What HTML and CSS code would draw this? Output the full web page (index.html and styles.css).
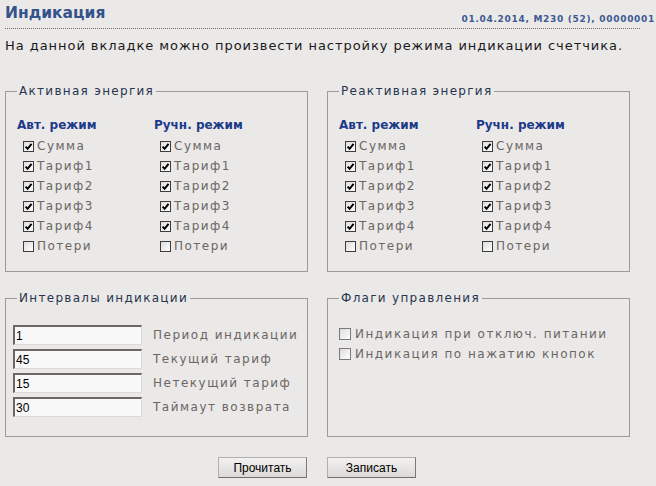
FILE: index.html
```html
<!DOCTYPE html>
<html lang="ru">
<head>
<meta charset="utf-8">
<link rel="stylesheet" href="styles.css">
</head>
<body>
<div class="page">
  <div class="header">
    <h1 class="title">Индикация</h1>
    <div class="meta">01.04.2014, M230 (52), 00000001</div>
  </div>
  <p class="intro">На данной вкладке можно произвести настройку режима индикации счетчика.</p>

  <div class="grid">
    <fieldset class="box box-top">
      <legend>Активная энергия</legend>
      <div class="cols">
        <div class="col">
          <div class="colhead">Авт. режим</div>
          <label class="cb"><span class="mark on"><svg viewBox="0 0 10 10"><path d="M1.8 5.2 L4 7.6 L8.4 2.2" /></svg></span>Сумма</label>
          <label class="cb"><span class="mark on"><svg viewBox="0 0 10 10"><path d="M1.8 5.2 L4 7.6 L8.4 2.2" /></svg></span>Тариф1</label>
          <label class="cb"><span class="mark on"><svg viewBox="0 0 10 10"><path d="M1.8 5.2 L4 7.6 L8.4 2.2" /></svg></span>Тариф2</label>
          <label class="cb"><span class="mark on"><svg viewBox="0 0 10 10"><path d="M1.8 5.2 L4 7.6 L8.4 2.2" /></svg></span>Тариф3</label>
          <label class="cb"><span class="mark on"><svg viewBox="0 0 10 10"><path d="M1.8 5.2 L4 7.6 L8.4 2.2" /></svg></span>Тариф4</label>
          <label class="cb"><span class="mark"></span>Потери</label>
        </div>
        <div class="col">
          <div class="colhead">Ручн. режим</div>
          <label class="cb"><span class="mark on"><svg viewBox="0 0 10 10"><path d="M1.8 5.2 L4 7.6 L8.4 2.2" /></svg></span>Сумма</label>
          <label class="cb"><span class="mark on"><svg viewBox="0 0 10 10"><path d="M1.8 5.2 L4 7.6 L8.4 2.2" /></svg></span>Тариф1</label>
          <label class="cb"><span class="mark on"><svg viewBox="0 0 10 10"><path d="M1.8 5.2 L4 7.6 L8.4 2.2" /></svg></span>Тариф2</label>
          <label class="cb"><span class="mark on"><svg viewBox="0 0 10 10"><path d="M1.8 5.2 L4 7.6 L8.4 2.2" /></svg></span>Тариф3</label>
          <label class="cb"><span class="mark on"><svg viewBox="0 0 10 10"><path d="M1.8 5.2 L4 7.6 L8.4 2.2" /></svg></span>Тариф4</label>
          <label class="cb"><span class="mark"></span>Потери</label>
        </div>
      </div>
    </fieldset>

    <fieldset class="box box-top">
      <legend>Реактивная энергия</legend>
      <div class="cols">
        <div class="col">
          <div class="colhead">Авт. режим</div>
          <label class="cb"><span class="mark on"><svg viewBox="0 0 10 10"><path d="M1.8 5.2 L4 7.6 L8.4 2.2" /></svg></span>Сумма</label>
          <label class="cb"><span class="mark on"><svg viewBox="0 0 10 10"><path d="M1.8 5.2 L4 7.6 L8.4 2.2" /></svg></span>Тариф1</label>
          <label class="cb"><span class="mark on"><svg viewBox="0 0 10 10"><path d="M1.8 5.2 L4 7.6 L8.4 2.2" /></svg></span>Тариф2</label>
          <label class="cb"><span class="mark on"><svg viewBox="0 0 10 10"><path d="M1.8 5.2 L4 7.6 L8.4 2.2" /></svg></span>Тариф3</label>
          <label class="cb"><span class="mark on"><svg viewBox="0 0 10 10"><path d="M1.8 5.2 L4 7.6 L8.4 2.2" /></svg></span>Тариф4</label>
          <label class="cb"><span class="mark"></span>Потери</label>
        </div>
        <div class="col">
          <div class="colhead">Ручн. режим</div>
          <label class="cb"><span class="mark on"><svg viewBox="0 0 10 10"><path d="M1.8 5.2 L4 7.6 L8.4 2.2" /></svg></span>Сумма</label>
          <label class="cb"><span class="mark on"><svg viewBox="0 0 10 10"><path d="M1.8 5.2 L4 7.6 L8.4 2.2" /></svg></span>Тариф1</label>
          <label class="cb"><span class="mark on"><svg viewBox="0 0 10 10"><path d="M1.8 5.2 L4 7.6 L8.4 2.2" /></svg></span>Тариф2</label>
          <label class="cb"><span class="mark on"><svg viewBox="0 0 10 10"><path d="M1.8 5.2 L4 7.6 L8.4 2.2" /></svg></span>Тариф3</label>
          <label class="cb"><span class="mark on"><svg viewBox="0 0 10 10"><path d="M1.8 5.2 L4 7.6 L8.4 2.2" /></svg></span>Тариф4</label>
          <label class="cb"><span class="mark"></span>Потери</label>
        </div>
      </div>
    </fieldset>

    <fieldset class="box box-bottom">
      <legend>Интервалы индикации</legend>
      <div class="fields">
        <div class="field"><input class="num" type="text" value="1"><span class="flabel">Период индикации</span></div>
        <div class="field"><input class="num" type="text" value="45"><span class="flabel">Текущий тариф</span></div>
        <div class="field"><input class="num" type="text" value="15"><span class="flabel">Нетекущий тариф</span></div>
        <div class="field"><input class="num" type="text" value="30"><span class="flabel">Таймаут возврата</span></div>
      </div>
    </fieldset>

    <fieldset class="box box-bottom">
      <legend>Флаги управления</legend>
      <div class="flags">
        <label class="cb"><span class="mark"></span>Индикация при отключ. питании</label>
        <label class="cb"><span class="mark"></span>Индикация по нажатию кнопок</label>
      </div>
    </fieldset>
  </div>

  <div class="actions">
    <button class="btn btn-read" type="button">Прочитать</button>
    <button class="btn btn-write" type="button">Записать</button>
  </div>
</div>
</body>
</html>
```

FILE: styles.css
```css
html, body {
  margin: 0;
  padding: 0;
  background: #ebe9e8;
}

.page {
  width: 656px;
  height: 486px;
  box-sizing: border-box;
  padding: 0 0 0 5px;
  font-family: "DejaVu Sans", Verdana, sans-serif;
  color: #1e1e1e;
}

.header {
  display: flex;
  justify-content: space-between;
  align-items: flex-end;
  width: 635px;
  height: 29px;
  border-bottom: 1px dotted #6a6a6a;
  box-sizing: border-box;
  padding-bottom: 3px;
}

.title {
  margin: 0;
  font-size: 15.5px;
  font-weight: bold;
  color: #34528c;
  line-height: 20px;
  position: relative;
  top: -2px;
}

.meta {
  font-size: 9px;
  font-weight: bold;
  color: #3d5a93;
  white-space: nowrap;
  margin-right: -15px;
  letter-spacing: 0.7px;
  line-height: 12px;
}

.intro {
  margin: 8px 0 0 0;
  font-size: 13px;
  letter-spacing: 0.95px;
  line-height: 18px;
  color: #1a1a1a;
}

.grid {
  display: grid;
  grid-template-columns: 303px 303px;
  column-gap: 19px;
  row-gap: 19px;
  margin-top: 29px;
}

.box {
  margin: 0;
  border: 1px solid #9b9b9b;
  padding: 0 0 0 11px;
  box-sizing: border-box;
  min-width: 0;
}

.box-top { height: 188px; }
.box-bottom { height: 146px; }

legend {
  padding: 0 2px;
  font-size: 12px;
  letter-spacing: 1.3px;
  color: #27354f;
  line-height: 14px;
}

.cols {
  display: grid;
  grid-template-columns: 137px 130px;
  margin-top: 19px;
}

.colhead {
  font-size: 12px;
  font-weight: bold;
  color: #1c3a8a;
  line-height: 16px;
  margin-bottom: 3px;
}

.cb {
  display: flex;
  align-items: center;
  height: 20px;
  font-size: 12px;
  letter-spacing: 1.5px;
  color: #6a6664;
  white-space: nowrap;
}

.col .cb {
  padding-left: 6px;
}

.mark {
  width: 11px;
  height: 11px;
  box-sizing: border-box;
  border: 1px solid #3c3c3c;
  background: linear-gradient(135deg, #dedcdb, #ffffff);
  margin-right: 3px;
  display: inline-flex;
  flex: none;
}

.mark svg {
  width: 9px;
  height: 9px;
  fill: none;
  stroke: #000;
  stroke-width: 2.2;
}

.fields {
  margin-top: 20px;
  display: flex;
  flex-direction: column;
  gap: 4px;
}

.field {
  display: flex;
  align-items: center;
  margin-left: -4px;
}

.num {
  width: 129px;
  height: 20px;
  box-sizing: border-box;
  border-style: solid;
  border-width: 2px 1px 1px 2px;
  border-color: #6b6764 #dcdad8 #dcdad8 #6b6764;
  background: #f8f8f8;
  font-family: "Liberation Sans", Arial, sans-serif;
  font-size: 12px;
  padding: 0 0 0 1px;
  color: #000;
  outline: none;
}

.flabel {
  margin-left: 11px;
  font-size: 12px;
  letter-spacing: 1.5px;
  color: #6a6664;
}

.flags {
  margin-top: 19px;
}

.flags .mark {
  border-color: #7a7a7a;
  width: 12px;
  height: 12px;
  margin-right: 4px;
}

.actions {
  display: flex;
  gap: 20px;
  margin-top: 20px;
  padding-left: 213px;
}

.btn {
  height: 21px;
  box-sizing: border-box;
  border: 1px solid #8e8e8e;
  border-color: #b0b0b0 #7a7a7a #6e6e6e #b0b0b0;
  background: linear-gradient(#f2f1f0, #dcdad8);
  font-family: "Liberation Sans", Arial, sans-serif;
  font-size: 12px;
  color: #000;
  padding: 0;
}

.btn-read { width: 89px; }
.btn-write { width: 89px; }
```
